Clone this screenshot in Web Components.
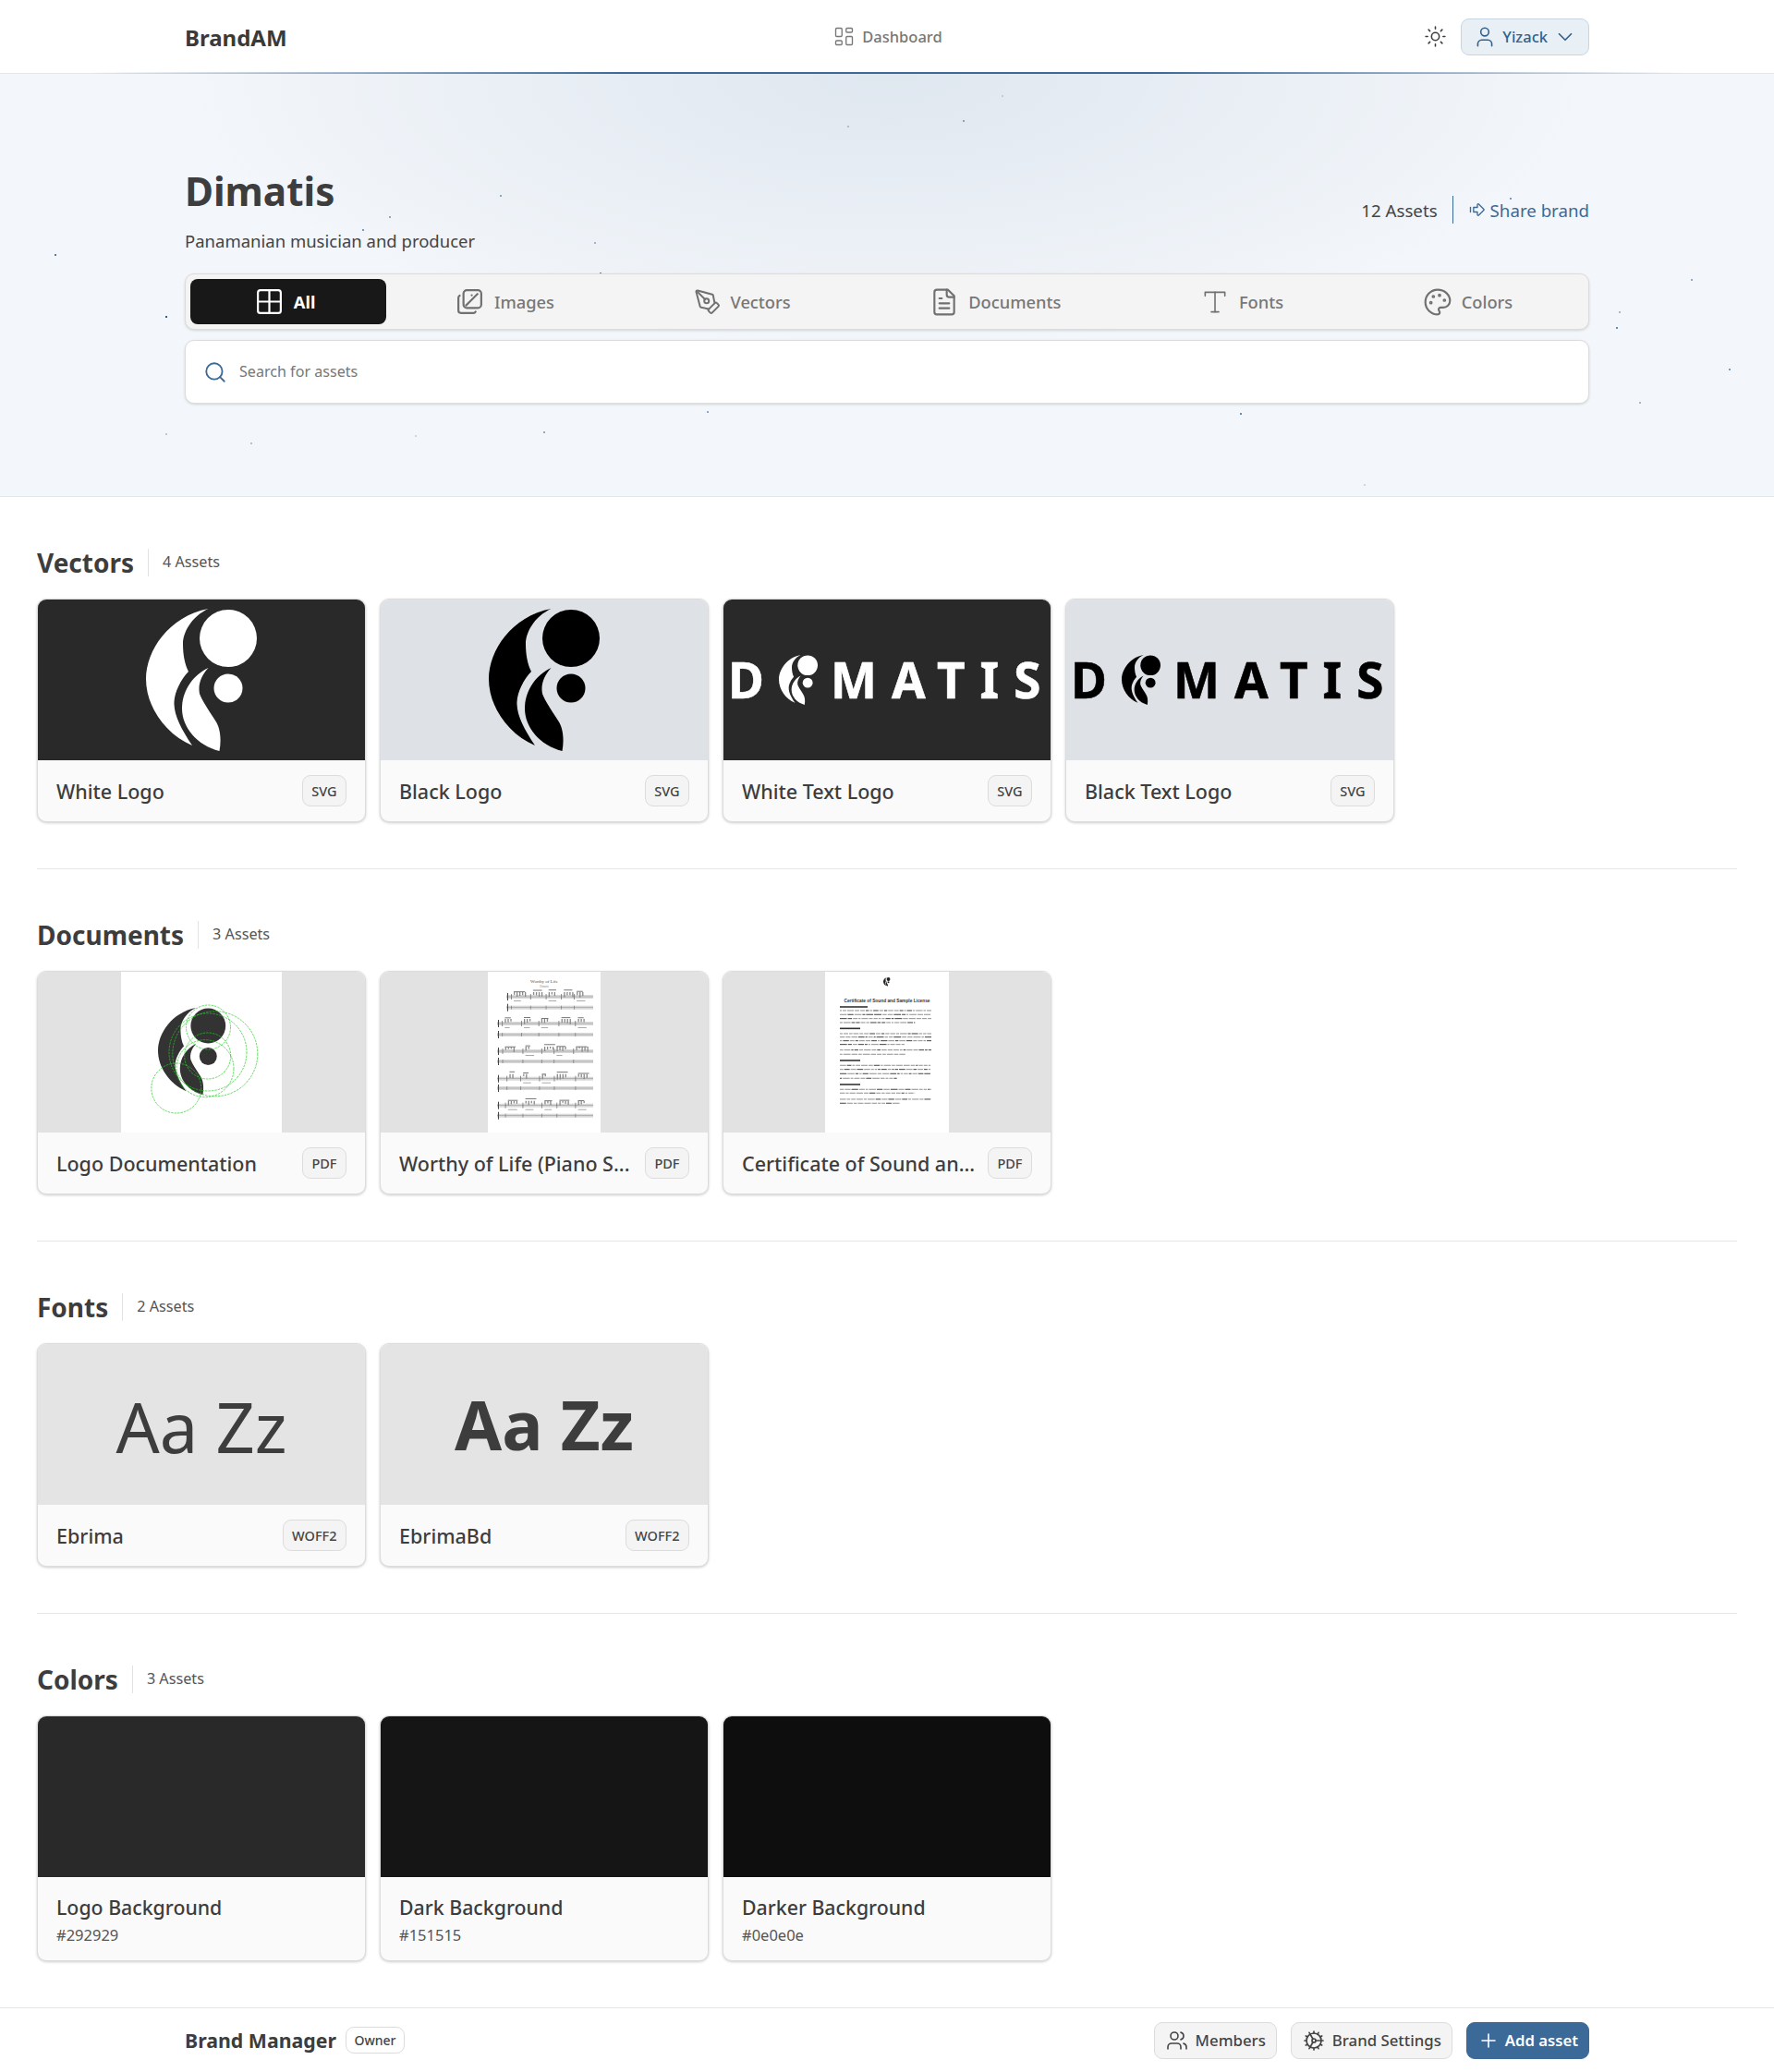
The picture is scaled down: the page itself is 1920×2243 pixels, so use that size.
<!DOCTYPE html>
<html lang="en">
<head>
<meta charset="utf-8">
<title>Dimatis - BrandAM</title>
<style>
  html, body { margin: 0; padding: 0; background: #fff; }
  body { font-family: "Noto Sans", "Open Sans", sans-serif; color: #3d3d3d; }
</style>
</head>
<body>
<brand-header></brand-header>
<brand-hero title="Dimatis" description="Panamanian musician and producer" count="12 Assets"></brand-hero>
<main-area>
  <asset-section title="Vectors" count="4 Assets">
    <asset-card name="White Logo" badge="SVG" bg="#292929"><logo-mark slot="preview" color="#fff" size="120"></logo-mark></asset-card>
    <asset-card name="Black Logo" badge="SVG" bg="#dee1e6"><logo-mark slot="preview" color="#000" size="120"></logo-mark></asset-card>
    <asset-card name="White Text Logo" badge="SVG" bg="#292929"><text-logo slot="preview" color="#fff"></text-logo></asset-card>
    <asset-card name="Black Text Logo" badge="SVG" bg="#dee1e6"><text-logo slot="preview" color="#000"></text-logo></asset-card>
  </asset-section>
  <asset-section title="Documents" count="3 Assets">
    <asset-card name="Logo Documentation" badge="PDF" bg="#e2e2e2"><doc-logo slot="preview"></doc-logo></asset-card>
    <asset-card name="Worthy of Life (Piano S..." badge="PDF" bg="#e2e2e2"><doc-sheet slot="preview"></doc-sheet></asset-card>
    <asset-card name="Certificate of Sound an..." badge="PDF" bg="#e2e2e2"><doc-cert slot="preview"></doc-cert></asset-card>
  </asset-section>
  <asset-section title="Fonts" count="2 Assets">
    <asset-card name="Ebrima" badge="WOFF2" bg="#e4e4e4"><font-sample slot="preview" weight="400">Aa Zz</font-sample></asset-card>
    <asset-card name="EbrimaBd" badge="WOFF2" bg="#e4e4e4"><font-sample slot="preview" weight="700">Aa Zz</font-sample></asset-card>
  </asset-section>
  <asset-section title="Colors" count="3 Assets" last>
    <asset-card name="Logo Background" sub="#292929" bg="#292929"></asset-card>
    <asset-card name="Dark Background" sub="#151515" bg="#151515"></asset-card>
    <asset-card name="Darker Background" sub="#0e0e0e" bg="#0e0e0e"></asset-card>
  </asset-section>
</main-area>
<brand-footer></brand-footer>

<script>
const ICONS = {
  dashboard: '<path d="M5 4h4a1 1 0 0 1 1 1v6a1 1 0 0 1-1 1H5a1 1 0 0 1-1-1V5a1 1 0 0 1 1-1"/><path d="M5 16h4a1 1 0 0 1 1 1v2a1 1 0 0 1-1 1H5a1 1 0 0 1-1-1v-2a1 1 0 0 1 1-1"/><path d="M15 12h4a1 1 0 0 1 1 1v6a1 1 0 0 1-1 1h-4a1 1 0 0 1-1-1v-6a1 1 0 0 1 1-1"/><path d="M15 4h4a1 1 0 0 1 1 1v2a1 1 0 0 1-1 1h-4a1 1 0 0 1-1-1V5a1 1 0 0 1 1-1"/>',
  all: '<rect x="3" y="3" width="18" height="18" rx="2"/><path d="M3 12h18M12 3v18"/>',
  images: '<path d="M7 5.667A2.667 2.667 0 0 1 9.667 3h8.666A2.667 2.667 0 0 1 21 5.667v8.666A2.667 2.667 0 0 1 18.333 17H9.667A2.667 2.667 0 0 1 7 14.333z"/><path d="M4.012 7.26A2.005 2.005 0 0 0 3 8.997v10c0 1.1.9 2 2 2h10c.75 0 1.158-.385 1.5-1"/><path d="M13.500 7h.01"/><path d="M9 15l9-9"/>',
  vectors: '<path d="M15.707 21.293a1 1 0 0 1-1.414 0l-1.586-1.586a1 1 0 0 1 0-1.414l5.586-5.586a1 1 0 0 1 1.414 0l1.586 1.586a1 1 0 0 1 0 1.414z"/><path d="m18 13-1.375-6.874a1 1 0 0 0-.746-.776L3.235 2.028a1 1 0 0 0-1.207 1.207L5.350 15.879a1 1 0 0 0 .776.746L13 18"/><path d="m2.300 2.300 7.286 7.286"/><circle cx="11" cy="11" r="2"/>',
  documents: '<path d="M15 2H6a2 2 0 0 0-2 2v16a2 2 0 0 0 2 2h12a2 2 0 0 0 2-2V7Z"/><path d="M14 2v4a2 2 0 0 0 2 2h4"/><path d="M10 9H8"/><path d="M16 13H8"/><path d="M16 17H8"/>',
  fonts: '<path d="M4 7V4h16v3"/><path d="M9 20h6"/><path d="M12 4v16"/>',
  colors: '<path d="M12 2C6.500 2 2 6.500 2 12s4.500 10 10 10c.926 0 1.648-.746 1.648-1.688 0-.437-.18-.835-.437-1.125-.29-.289-.438-.652-.438-1.125a1.640 1.640 0 0 1 1.668-1.668h1.996c3.051 0 5.555-2.503 5.555-5.554C21.965 6.012 17.461 2 12 2z"/><circle cx="13.500" cy="6.500" r=".6"/><circle cx="17.500" cy="10.500" r=".6"/><circle cx="8.500" cy="7.500" r=".6"/><circle cx="6.500" cy="12.500" r=".6"/>',
  search: '<circle cx="11" cy="11" r="8"/><path d="m21 21-4.300-4.300"/>',
  sun: '<circle cx="12" cy="12" r="4"/><path d="M12 2v2M12 20v2M4.930 4.930l1.410 1.410M17.660 17.660l1.410 1.410M2 12h2M20 12h2M6.340 17.660l-1.410 1.410M19.070 4.930l-1.410 1.410"/>',
  user: '<path d="M19 21v-2a4 4 0 0 0-4-4H9a4 4 0 0 0-4 4v2"/><circle cx="12" cy="7" r="4"/>',
  chevron: '<path d="m6 9 6 6 6-6"/>',
  share: '<path d="M12 9V5.414a1 1 0 0 1 1.707-.707l6.586 6.586a1 1 0 0 1 0 1.414l-6.586 6.586A1 1 0 0 1 12 18.586V15H7V9z"/><path d="M3 9v6"/>',
  members: '<path d="M16 21v-2a4 4 0 0 0-4-4H6a4 4 0 0 0-4 4v2"/><path d="M16 3.128a4 4 0 0 1 0 7.744"/><path d="M22 21v-2a4 4 0 0 0-3-3.870"/><circle cx="9" cy="7" r="4"/>',
  settings: '<path d="M12 20a8 8 0 1 0 0-16 8 8 0 0 0 0 16Z"/><path d="M12 14a2 2 0 1 0 0-4 2 2 0 0 0 0 4Z"/><path d="M12 2v2"/><path d="M12 22v-2"/><path d="m17 20.660-1-1.730"/><path d="M11 10.270 7 3.340"/><path d="m20.660 17-1.730-1"/><path d="m3.340 7 1.730 1"/><path d="M14 12h8"/><path d="M2 12h2"/><path d="m20.660 7-1.730 1"/><path d="m3.340 17 1.730-1"/><path d="m17 3.340-1 1.730"/><path d="m11 13.730-4 6.930"/>',
  plus: '<path d="M5 12h14M12 5v14"/>'
};
const MARK = '<circle cx="89" cy="32" r="31"/><circle cx="89" cy="86" r="15.500"/>' +
  '<path d="M67.500 0C25 8 0 45 0 76c0 29 20 59 50 72-12-18-20-33-19.500-47 .5-11 7.500-25 15.500-33-4-8-6-18-6-30 0-13 10-30 27.500-38Z"/>' +
  '<path d="M67.500 64C50 72 39 90 39 108c0 20 16 40 40.500 46 2.500-14 .5-26-4.500-33-7-11-14-21-17-29-2-10 2-20 9.500-28Z"/>';

function icon(name, size, sw) {
  return `<svg width="${size}" height="${size}" viewBox="0 0 24 24" fill="none" stroke="currentColor" stroke-width="${sw}" stroke-linecap="round" stroke-linejoin="round" style="display:block;flex:none">${ICONS[name]}</svg>`;
}

class Base extends HTMLElement {
  constructor() { super(); this.attachShadow({ mode: 'open' }); }
  a(n, d = '') { return this.hasAttribute(n) ? this.getAttribute(n) : d; }
}

class BrandHeader extends Base {
  connectedCallback() {
    this.shadowRoot.innerHTML = `<style>
      :host { display:block; height:80px; box-sizing:border-box; background:#fff; position:relative; border-bottom:1px solid #e6e6e6; }
      .row { height:79px; box-sizing:border-box; padding:0 200px; display:grid; grid-template-columns:1fr auto 1fr; align-items:center; }
      .logo { font-size:24px; font-weight:700; color:#3a3a3a; margin-top:1px; }
      .nav { display:flex; align-items:center; gap:6px; color:#777; font-size:16.500px; font-weight:500; margin-top:-1px; }
      .right { display:flex; justify-content:flex-end; align-items:center; gap:15px; }
      .sun { color:#3d3d3d; margin-top:-1px; }
      .user { display:flex; align-items:center; gap:6px; height:40px; box-sizing:border-box; padding:0 12px; border:1px solid #c6d5e3; border-radius:9px; background:#e9f0f5; color:#34618c; font-size:16.500px; font-weight:500; }
      .line { position:absolute; left:0; right:0; bottom:-1px; height:2px; background:linear-gradient(90deg,transparent 5%,#3b6a98 35%,#3b6a98 65%,transparent 95%); }
    </style>
    <div class="row">
      <div class="logo">BrandAM</div>
      <div class="nav">${icon('dashboard', 27, 1.2)}<span>Dashboard</span></div>
      <div class="right"><span class="sun">${icon('sun', 25, 1.5)}</span>
        <div class="user">${icon('user', 26, 1.5)}<span>Yizack</span>${icon('chevron', 26, 1.6)}</div></div>
    </div><div class="line"></div>`;
  }
}

class StarField extends Base {
  connectedCallback() {
    const pts = [[541,211,.5],[421,234,.5],[392,248,.6],[59,275,.8],[643,262,.4],[649,295,.7],[179,342,1],[917,136,.3],[765,445,.5],[179,469,.3],[449,471,.2],[588,467,.5],[271,479,.35],[1084,103,.2],[1042,130,.5],[1634,214,.6],[1830,302,.5],[1752,337,.4],[1749,354,.7],[1871,399,.6],[1774,435,.4],[1342,447,.7],[1476,524,.2]];
    this.shadowRoot.innerHTML = `<style>
      :host { position:absolute; inset:0; display:block; pointer-events:none; }
      i { position:absolute; width:2px; height:2px; background:#2f5d88; }
    </style>` + pts.map(p => `<i style="left:${p[0]}px;top:${p[1]-80}px;opacity:${p[2]}"></i>`).join('');
  }
}

class BrandHero extends Base {
  connectedCallback() {
    this.shadowRoot.innerHTML = `<style>
      :host { display:block; position:relative; box-sizing:border-box; height:458px; border-bottom:1px solid #e6e6e6; background:
        radial-gradient(ellipse 760px 300px at 50% 0, rgba(59,106,152,.11), rgba(59,106,152,.05) 55%, rgba(59,106,152,0) 100%), #f3f6fa; }
      .wrap { position:relative; box-sizing:border-box; padding:93px 200px 0; }
      .top { display:flex; justify-content:space-between; align-items:center; height:101px; }
      .left { align-self:flex-start; padding-top:5px; }
      h1 { margin:0; font-size:42.300px; line-height:58px; font-weight:700; color:#3d3d3d; }
      p { margin:13px 0 0; font-size:18.500px; line-height:24px; color:#444; }
      .meta { display:flex; align-items:center; font-size:18.700px; color:#444; margin-top:7px; }
      .sep { width:1px; height:30px; background:#3b6a98; margin:0 16px; }
      .share { display:flex; align-items:center; gap:4px; color:#3b6a98; }
      .stack { display:flex; flex-direction:column; gap:11px; margin-top:22px; }
    </style>
    <star-field></star-field>
    <div class="wrap">
      <div class="top"><div class="left"><h1>${this.a('title')}</h1><p>${this.a('description')}</p></div>
        <div class="meta"><span>${this.a('count')}</span><span class="sep"></span><span class="share">${icon('share', 20, 1.6)}<span>Share brand</span></span></div></div>
      <div class="stack"><filter-tabs></filter-tabs><search-box></search-box></div>
    </div>`;
  }
}

class FilterTabs extends Base {
  connectedCallback() {
    const tabs = [['all','All',1,33],['images','Images',0,33],['vectors','Vectors',0,30],['documents','Documents',0,32],['fonts','Fonts',0,32],['colors','Colors',0,32]];
    this.shadowRoot.innerHTML = `<style>
      :host { display:flex; gap:5px; box-sizing:border-box; height:61px; padding:5px; background:#f4f4f4; border:1px solid #dcdcdc; border-radius:10px; box-shadow:0 1px 3px rgba(0,0,0,.14); }
      .t { flex:1 1 auto; display:flex; align-items:center; justify-content:center; gap:10px; border-radius:8px; color:#777; font-size:18.300px; font-weight:500; }
      .t span { margin-right:8px; }
      .t svg { color:#707070; }
      .t.on { background:#181818; color:#fff; font-weight:700; }
      .t.on svg { color:#fff; }
    </style>` + tabs.map(t => `<div class="t${t[2] ? ' on' : ''}">${icon(t[0], t[3], t[0]==='fonts' ? 1.2 : 1.6)}<span>${t[1]}</span></div>`).join('');
  }
}

class SearchBox extends Base {
  connectedCallback() {
    this.shadowRoot.innerHTML = `<style>
      :host { display:flex; align-items:center; gap:13px; box-sizing:border-box; height:69px; padding:0 19px; background:#fff; border:1px solid #dcdcdc; border-radius:10px; box-shadow:0 1px 3px rgba(0,0,0,.14); }
      .i { color:#3b6a98; }
      span { color:#777; font-size:16.100px; margin-top:-1px; }
    </style><div class="i">${icon('search', 26, 1.7)}</div><span>Search for assets</span>`;
  }
}

class MainArea extends Base {
  connectedCallback() {
    this.shadowRoot.innerHTML = `<style>:host { display:block; padding:0 40px; }</style><slot></slot>`;
  }
}

class AssetSection extends Base {
  connectedCallback() {
    const last = this.hasAttribute('last');
    this.shadowRoot.innerHTML = `<style>
      :host { display:block; padding:50px 0; ${last ? '' : 'border-bottom:1px solid #e6e6e6;'} }
      .head { display:flex; align-items:center; height:42px; margin-bottom:18px; }
      h2 { margin:0; font-size:28px; line-height:42px; font-weight:700; color:#3d3d3d; }
      .sep { width:1px; height:30px; background:#e2e2e2; margin:0 15px; }
      .c { font-size:16.200px; color:#555; margin-top:-3px; }
      .grid { display:grid; grid-template-columns:repeat(5,1fr); gap:15px; }
    </style>
    <div class="head"><h2>${this.a('title')}</h2><span class="sep"></span><span class="c">${this.a('count')}</span></div>
    <div class="grid"><slot></slot></div>`;
  }
}

class AssetCard extends Base {
  connectedCallback() {
    const sub = this.a('sub'), badge = this.a('badge');
    this.shadowRoot.innerHTML = `<style>
      :host { display:block; box-sizing:border-box; border:1px solid #dcdcdc; border-radius:10px; overflow:hidden; background:#fafafa; box-shadow:0 1px 3px rgba(0,0,0,.2); min-width:0; }
      .p { height:174px; background:${this.a('bg')}; display:flex; align-items:center; justify-content:center; overflow:hidden; }
      .f { display:flex; align-items:center; justify-content:space-between; gap:8px; box-sizing:border-box; padding:0 20px; height:66px; }
      .f .n { margin-top:2px; }
      .f.sw { display:block; height:90px; padding:17px 20px 0; }
      .n { font-size:21.500px; line-height:28px; font-weight:500; color:#3d3d3d; white-space:nowrap; min-width:0; }
      .f.sw .n { font-size:21.300px; }
      .s { font-size:16.500px; line-height:22px; color:#555; margin-top:5px; }
      .b { flex:none; box-sizing:border-box; height:34px; line-height:32px; padding:0 9.500px; border:1px solid #dcdcdc; border-radius:9px; background:#f4f4f4; font-size:14.500px; font-weight:500; color:#444; }
    </style>
    <div class="p"><slot name="preview"></slot></div>
    ${sub ? `<div class="f sw"><div class="n">${this.a('name')}</div><div class="s">${sub}</div></div>`
          : `<div class="f"><div class="n">${this.a('name')}</div><div class="b">${badge}</div></div>`}`;
  }
}

class LogoMark extends Base {
  connectedCallback() {
    const w = +this.a('size', 120);
    this.shadowRoot.innerHTML = `<style>:host { display:block; line-height:0; }</style>
    <svg width="${w}" height="${w * 154 / 120}" viewBox="0 0 120 154" fill="${this.a('color', '#000')}">${MARK}</svg>`;
  }
}

class TextLogo extends Base {
  connectedCallback() {
    const c = this.a('color', '#000');
    this.shadowRoot.innerHTML = `<style>
      :host { display:flex; align-items:center; width:100%; box-sizing:border-box; padding-left:5px; color:${c}; font-family:"Noto Sans",sans-serif; font-size:53px; font-weight:700; line-height:56px; white-space:nowrap; -webkit-text-stroke:.6px ${c}; }
      .d { width:55px; flex:none; }
      svg { flex:none; display:block; margin-right:14px; }
      .m { letter-spacing:16px; }
      .m span { letter-spacing:0; }
    </style><span class="d">D</span><svg width="42" height="54" viewBox="0 0 120 154" fill="${c}">${MARK}</svg><span class="m">MATI<span>S</span></span>`;
  }
}

class DocLogo extends Base {
  connectedCallback() {
    const cs = [[59.8,126,27],[101.8,88.8,46],[94,87,42],[94.5,60,24],[93.7,91,25],[91,104.7,31]];
    this.shadowRoot.innerHTML = `<style>:host { display:block; line-height:0; }</style>
    <svg width="174" height="174" viewBox="0 0 174 174" style="background:#fff">
      <g transform="translate(40 39) scale(.61)" fill="#333">${MARK}</g>
      <g fill="none" stroke="#22cc22" stroke-width=".7" stroke-dasharray="2.500 1">${cs.map(c => `<circle cx="${c[0]}" cy="${c[1]}" r="${c[2]}"/>`).join('')}</g>
    </svg>`;
  }
}

class DocSheet extends Base {
  connectedCallback() {
    let seed = 7;
    const r = () => (seed = (seed * 16807) % 2147483647) / 2147483647;
    const rows = [[27,38.7,20],[56,68,10],[86,97,10],[115.7,126,10],[144.7,155.7,10]];
    let s = '';
    for (const [a, b, x0] of rows) {
      for (const y of [a, b]) {
        s += `<rect x="${x0}" y="${y - 2}" width="${114 - x0}" height="4" fill="#d8d8d8"/>`;
        s += `<rect x="${x0}" y="${y - .3}" width="${114 - x0}" height=".6" fill="#999"/>`;
      }
      s += `<rect x="${x0 + 1}" y="${a - 4}" width="1" height="8" fill="#444"/><rect x="${x0 + 1}" y="${b - 4}" width="1" height="8" fill="#444"/>`;
      for (let i = 0; i < 5; i++) {
        const x = x0 + 5 + i * (104 - x0) / 5 + r() * 6;
        s += `<rect x="${x}" y="${a - 3}" width=".7" height="6" fill="#666"/><rect x="${x}" y="${b - 2}" width=".7" height="4" fill="#777"/>`;
        const bw = 4 + r() * 9;
        s += `<rect x="${x + 3}" y="${a - 5 - r() * 3}" width="${bw}" height="1" fill="#777"/>`;
        for (let j = 0; j < bw / 3; j++) s += `<rect x="${x + 3 + j * 3}" y="${a - 5}" width="1.300" height="${2 + r() * 4}" fill="#888"/>`;
        if (r() > .4) s += `<rect x="${x + 3}" y="${a + 4}" width="${5 + r() * 5}" height="1" fill="#aaa"/>`;
      }
    }
    this.shadowRoot.innerHTML = `<style>:host { display:block; line-height:0; }</style>
    <svg width="122" height="174" viewBox="0 0 122 174" style="background:#fff">
      <filter id="b"><feGaussianBlur stdDeviation=".25"/></filter>
      <text x="61" y="12" text-anchor="middle" font-size="5" font-family="Liberation Serif, serif" fill="#555">Worthy of Life</text>
      <text x="61" y="17" text-anchor="middle" font-size="3" font-family="Liberation Serif, serif" fill="#888">Dimatis</text>
      <g filter="url(#b)">${s}</g></svg>`;
  }
}

class DocCert extends Base {
  connectedCallback() {
    let seed = 11;
    const r = () => (seed = (seed * 16807) % 2147483647) / 2147483647;
    const heads = [150,220,324,402];
    const lines = [162,175,188,201,237,248,260,272,290,304,340,353,367,382,418,430,450,463];
    let s = '';
    const toY = z => z / 3 - 12;
    for (const z of heads) s += `<rect x="16" y="${toY(z) - .8}" width="${z === 150 ? 30 : 22}" height="1.600" fill="#333"/>`;
    for (const z of lines) {
      let x = 16;
      const end = z === 201 || z === 272 || z === 304 || z === 382 || z === 430 || z === 463 ? 70 + r() * 30 : 115;
      while (x < end) {
        const w = 2 + r() * 6;
        s += `<rect x="${x}" y="${toY(z) - .6}" width="${Math.min(w, end - x)}" height="1.100" fill="${r() > .7 ? '#555' : '#999'}"/>`;
        x += w + 1;
      }
    }
    this.shadowRoot.innerHTML = `<style>:host { display:block; line-height:0; }</style>
    <svg width="134" height="174" viewBox="0 0 134 174" style="background:#fff">
      <filter id="b"><feGaussianBlur stdDeviation=".2"/></filter>
      <g transform="translate(63 6) scale(.062)" fill="#222">${MARK}</g>
      <text x="67" y="33" text-anchor="middle" font-size="4.800" font-weight="700" font-family="Liberation Sans, sans-serif" fill="#333">Certificate of Sound and Sample License</text>
      <g filter="url(#b)">${s}</g></svg>`;
  }
}

class FontSample extends Base {
  connectedCallback() {
    const w = this.a('weight', '400');
    this.shadowRoot.innerHTML = `<style>
      :host { display:block; font-family:"Noto Sans",sans-serif; font-size:74px; line-height:90px; font-weight:${w}; color:#3d3d3d; white-space:nowrap; margin-top:${w === '700' ? -1 : 5}px; }
    </style><slot></slot>`;
  }
}

class BrandFooter extends Base {
  connectedCallback() {
    this.shadowRoot.innerHTML = `<style>
      :host { display:flex; align-items:center; justify-content:space-between; box-sizing:border-box; height:70px; padding:0 200px; border-top:1px solid #e6e6e6; background:#fff; }
      .l { display:flex; align-items:center; gap:10px; }
      b { font-size:21.300px; font-weight:700; color:#3d3d3d; }
      .own { box-sizing:border-box; height:29px; line-height:27px; padding:0 8.500px; border:1px solid #dcdcdc; border-radius:9px; font-size:14px; font-weight:500; color:#444; }
      .r { display:flex; gap:15px; }
      .b { display:flex; align-items:center; gap:8px; box-sizing:border-box; height:40px; padding:0 11px 0 12px; border:1px solid #dcdcdc; border-radius:9px; background:#f4f4f4; color:#444; font-size:16.800px; font-weight:500; }
      .b.p { background:#3b6a98; border-color:#3b6a98; color:#fff; font-weight:600; font-size:16.700px; padding:0 11px 0 11px; gap:6px; }
    </style>
    <div class="l"><b>Brand Manager</b><span class="own">Owner</span></div>
    <div class="r"><div class="b">${icon('members', 24, 1.6)}<span>Members</span></div>
      <div class="b">${icon('settings', 24, 1.7)}<span>Brand Settings</span></div>
      <div class="b p">${icon('plus', 24, 1.6)}<span>Add asset</span></div></div>`;
  }
}

const defs = { 'brand-header': BrandHeader, 'star-field': StarField, 'brand-hero': BrandHero, 'filter-tabs': FilterTabs, 'search-box': SearchBox, 'main-area': MainArea, 'asset-section': AssetSection, 'asset-card': AssetCard, 'logo-mark': LogoMark, 'text-logo': TextLogo, 'doc-logo': DocLogo, 'doc-sheet': DocSheet, 'doc-cert': DocCert, 'font-sample': FontSample, 'brand-footer': BrandFooter };
for (const k in defs) customElements.define(k, defs[k]);
</script>
</body>
</html>
